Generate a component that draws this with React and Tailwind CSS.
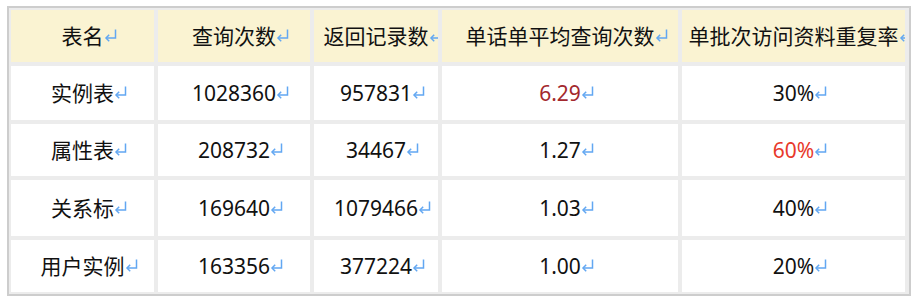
import React from "react"

const cols = "grid-cols-[143px_152px_124px_236px_223px]"

const header = ["表名", "查询次数", "返回记录数", "单话单平均查询次数", "单批次访问资料重复率"]

const rows = [
  { h: "h-[54px]", cells: ["实例表", "1028360", "957831", { t: "6.29", c: "text-[#a3282d]" }, "30%"] },
  { h: "h-[52px]", cells: ["属性表", "208732", "34467", "1.27", { t: "60%", c: "text-[#e8392b]" }] },
  { h: "h-[56px]", cells: ["关系标", "169640", "1079466", "1.03", "40%"] },
  { h: "h-[52px]", cells: ["用户实例", "163356", "377224", "1.00", "20%"] },
]

function Mark() {
  return (
    <svg
      width="13"
      height="13"
      viewBox="0 0 13 13"
      className="inline-block -mr-[13px] align-[2px]"
      fill="none"
      stroke="#62a7f2"
      strokeWidth="1.5"
    >
      <path d="M11.5 0.5 V9 H2" />
      <path d="M5.2 5.8 L2 9 L5.2 12.2" />
    </svg>
  )
}

function Cell({ value, className = "" }) {
  const text = typeof value === "string" ? value : value.t
  const color = typeof value === "string" ? "text-[#111]" : value.c
  return (
    <div className={`flex items-center justify-center overflow-hidden whitespace-nowrap ${className}`}>
      <span className={color}>
        {text}
        <Mark />
      </span>
    </div>
  )
}

export default function App() {
  return (
    <div className="bg-white w-[916px] h-[300px] pt-[6px] pl-[7px]" style={{ fontFamily: '"Noto Sans", "Noto Sans CJK SC", sans-serif' }}>
      <div className={`w-[904px] grid ${cols} gap-[4px] border-2 border-[#cdcdcd] bg-[#ececec] pt-[2px] pl-[2px] pr-[4px] pb-[2px] text-[21px] leading-none`}>
        {header.map((h) => (
          <Cell key={h} value={h} className="h-[52px] bg-[#faf3d2]" />
        ))}
        {rows.map((r, i) =>
          r.cells.map((c, j) => <Cell key={i + "-" + j} value={c} className={`${r.h} bg-white`} />)
        )}
      </div>
    </div>
  )
}
